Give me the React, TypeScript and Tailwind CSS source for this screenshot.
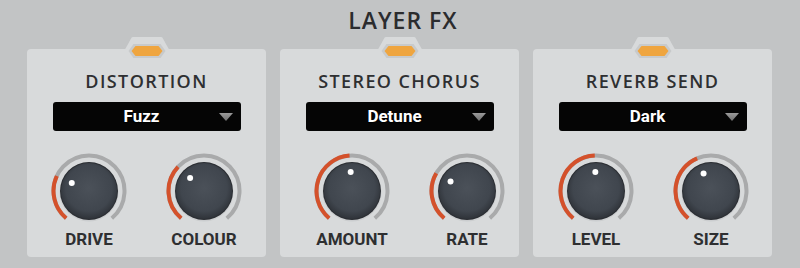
import "react"

type KnobData = {
  label: string
  value: number
}

type FxPanel = {
  title: string
  preset: string
  knobs: KnobData[]
  shift: string
}

const panels: FxPanel[] = [
  {
    title: "DISTORTION",
    preset: "Fuzz",
    knobs: [
      { label: "DRIVE", value: -65 },
      { label: "COLOUR", value: -47 },
    ],
    shift: "",
  },
  {
    title: "STEREO CHORUS",
    preset: "Detune",
    knobs: [
      { label: "AMOUNT", value: -4 },
      { label: "RATE", value: -60 },
    ],
    shift: "pl-5",
  },
  {
    title: "REVERB SEND",
    preset: "Dark",
    knobs: [
      { label: "LEVEL", value: -2 },
      { label: "SIZE", value: -23 },
    ],
    shift: "pl-[2px]",
  },
]

const START = -140
const END = 140

// angle measured clockwise from 12 o'clock
const pt = (cx: number, cy: number, r: number, deg: number) => {
  const a = (deg * Math.PI) / 180
  return [cx + r * Math.sin(a), cy - r * Math.cos(a)]
}

const arc = (r: number, from: number, to: number) => {
  const [x1, y1] = pt(38, 38, r, from)
  const [x2, y2] = pt(38, 38, r, to)
  const large = to - from > 180 ? 1 : 0
  return `M${x1} ${y1} A${r} ${r} 0 ${large} 1 ${x2} ${y2}`
}

const Knob = ({ label, value }: KnobData) => {
  const [dx, dy] = pt(38, 38, 19, value)
  return (
    <div className="flex w-[76px] flex-col items-center">
      <svg width="76" height="76" viewBox="0 0 76 76">
        <defs>
          <radialGradient id="knobBody" cx="50%" cy="45%" r="55%">
            <stop offset="0%" stopColor="#4b5159" />
            <stop offset="75%" stopColor="#40464e" />
            <stop offset="100%" stopColor="#2f3339" />
          </radialGradient>
        </defs>
        <path d={arc(35.5, START, END)} stroke="#a9aaab" strokeWidth="4" fill="none" />
        <path d={arc(35.5, START, value)} stroke="#d4512b" strokeWidth="4" fill="none" />
        <circle cx="38" cy="39" r="29.5" fill="#c3c5c6" opacity="0.6" />
        <circle cx="38" cy="38" r="29" fill="#2a2d32" />
        <circle cx="38" cy="38" r="28" fill="url(#knobBody)" />
        <circle cx={dx} cy={dy} r="3" fill="#ffffff" />
      </svg>
      <p className="mt-[2px] font-['Roboto',sans-serif] text-[17px] font-bold leading-none text-[#2e2f31]">
        {label}
      </p>
    </div>
  )
}

const Tab = () => (
  <svg
    className="absolute left-1/2 top-[-12px] -translate-x-1/2"
    width="44"
    height="24"
    viewBox="0 0 44 24"
  >
    <path d="M0 12.5 L6.5 0.8 Q7 0 8 0 L36 0 Q37 0 37.5 0.8 L44 12.5 Z" fill="#d8dadb" />
    <path d="M3.5 14 L8.5 7 L35.5 7 L40.5 14 L35.5 21 L8.5 21 Z" fill="#c8cacb" />
    <path d="M6.5 14 L10.5 9 L33.5 9 L37.5 14 L33.5 19 L10.5 19 Z" fill="#efa53f" />
  </svg>
)

export default function App() {
  return (
    <div className="h-[268px] w-[800px] bg-[#c2c4c5] pt-[6px]">
      <h1 className="pl-[6px] text-center font-['Open_Sans',sans-serif] text-[23px] font-semibold leading-[28px] tracking-[1px] text-[#2b2c2e]">
        LAYER FX
      </h1>
      <div className="mt-[15px] flex gap-[14px] pl-[27px]">
        {panels.map((p) => (
          <div
            key={p.title}
            className="relative flex h-[208px] w-[239px] flex-col items-center rounded-[4px] bg-[#d8dadb] pt-[23px]"
          >
            <Tab />
            <p className="font-['Open_Sans',sans-serif] text-[18px] font-semibold leading-[18px] tracking-[1.4px] text-[#2e2f31]">
              {p.title}
            </p>
            <div className="mt-[12px] flex h-[29px] w-[188px] items-center rounded-[3px] bg-[#050505] pl-[8px] pr-[8px]">
              <span className="flex-1 pl-[4px] text-center font-['Roboto',sans-serif] text-[17px] font-bold text-white [text-shadow:0_1px_1px_#000]">
                {p.preset}
              </span>
              <svg width="14" height="8" viewBox="0 0 14 8">
                <defs>
                  <linearGradient id="tri" x1="0" y1="0" x2="0" y2="1">
                    <stop offset="0%" stopColor="#9a9a9a" />
                    <stop offset="100%" stopColor="#6f6f6f" />
                  </linearGradient>
                </defs>
                <path d="M0 0 L14 0 L7 8 Z" fill="url(#tri)" />
              </svg>
            </div>
            <div className={`mt-[22px] flex w-full justify-center gap-[39px] ${p.shift}`}>
              {p.knobs.map((k) => (
                <Knob key={k.label} {...k} />
              ))}
            </div>
          </div>
        ))}
      </div>
    </div>
  )
}
